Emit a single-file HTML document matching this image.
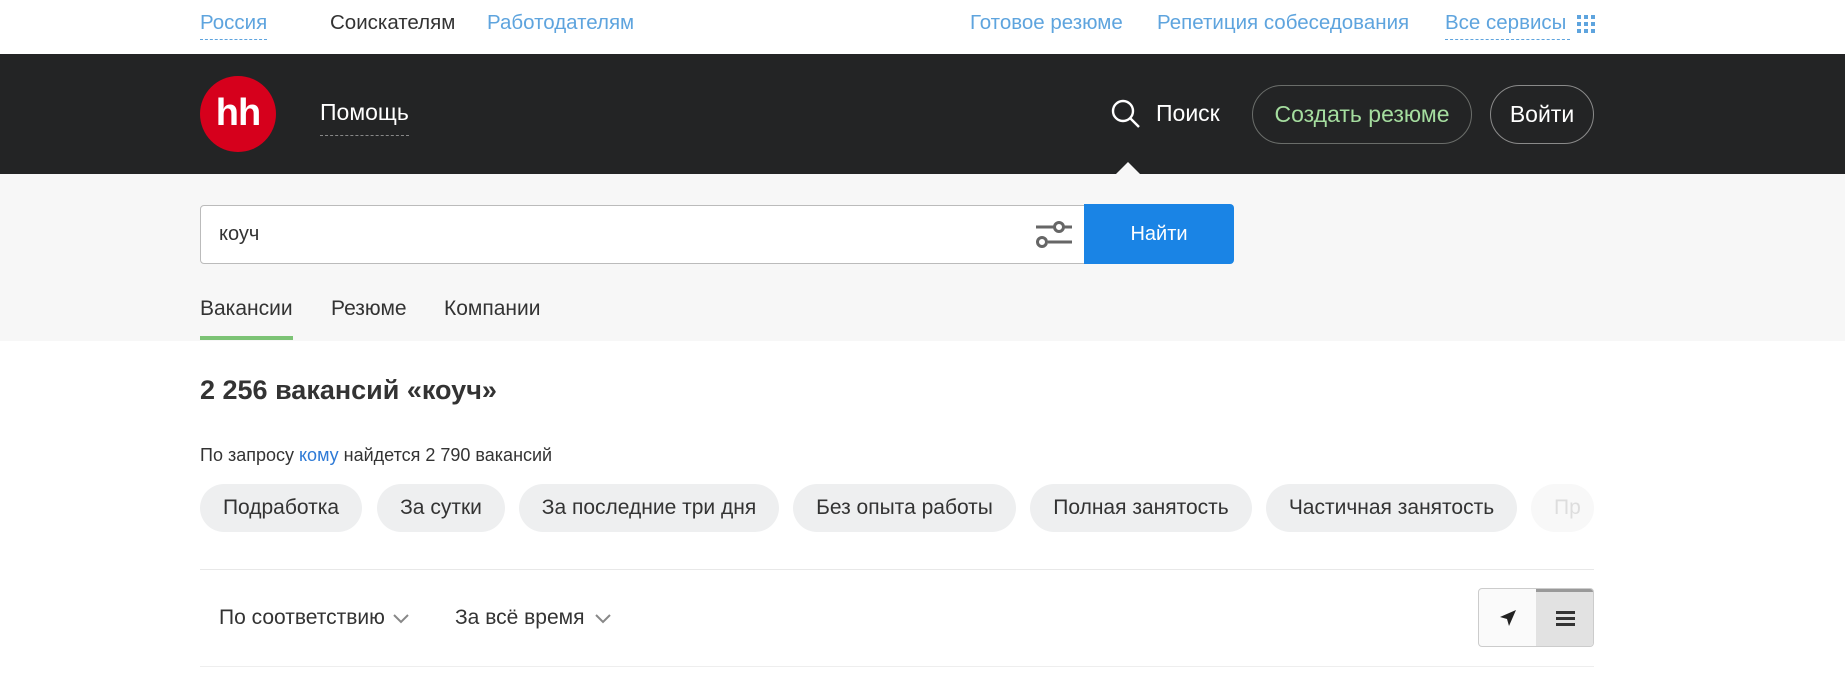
<!DOCTYPE html>
<html><head><meta charset="utf-8"><style>
*{box-sizing:border-box;margin:0;padding:0}
body{width:1845px;height:677px;overflow:hidden;background:#fff;font-family:"Liberation Sans",Arial,sans-serif;color:#333;position:relative}
.a{position:absolute;white-space:nowrap}
.top{position:absolute;left:0;top:0;width:1845px;height:54px;background:#fff;font-size:20.5px}
.blue{color:#5ea4de}
.dash{border-bottom:1px dashed #5ea4de;padding-bottom:4px}
.hdr{position:absolute;left:0;top:54px;width:1845px;height:120px;background:#232425}
.srch{position:absolute;left:0;top:174px;width:1845px;height:167px;background:#f7f7f7}
.chip{position:absolute;top:484px;height:48px;border-radius:24px;background:#eeeff0;font-size:21px;line-height:48px;text-align:center;color:#333}
</style></head><body>
<div class="top">
<span class="a blue dash" style="left:200px;top:11px">Россия</span>
<span class="a" style="left:330px;top:11px;color:#333">Соискателям</span>
<span class="a blue" style="left:487px;top:11px">Работодателям</span>
<span class="a blue" style="left:970px;top:11px">Готовое резюме</span>
<span class="a blue" style="left:1157px;top:11px">Репетиция собеседования</span>
<span class="a blue dash" style="left:1445px;top:11px;width:125px">Все сервисы</span>
<svg class="a" style="left:1577px;top:15px" width="18" height="18" viewBox="0 0 18 18" fill="#5ea4de"><rect x="0" y="0" width="4" height="4"/><rect x="7" y="0" width="4" height="4"/><rect x="14" y="0" width="4" height="4"/><rect x="0" y="7" width="4" height="4"/><rect x="7" y="7" width="4" height="4"/><rect x="14" y="7" width="4" height="4"/><rect x="0" y="14" width="4" height="4"/><rect x="7" y="14" width="4" height="4"/><rect x="14" y="14" width="4" height="4"/></svg>
</div>
<div class="hdr">
<div class="a" style="left:200px;top:22px;width:76px;height:76px;border-radius:50%;background:#d6001c;color:#fff;font-weight:bold;font-size:38px;line-height:74px;text-align:center;letter-spacing:-1px">hh</div>
<span class="a" style="left:320px;top:45px;font-size:23px;color:#fff;border-bottom:1px dashed #888;padding-bottom:9px">Помощь</span>
<svg class="a" style="left:1110px;top:44px" width="32" height="32" viewBox="0 0 32 32" fill="none" stroke="#fff" stroke-width="2.4"><circle cx="13" cy="13" r="10"/><path d="M20.5 20.5 L29 29"/></svg>
<span class="a" style="left:1156px;top:46px;font-size:23px;color:#fff">Поиск</span>
<div class="a" style="left:1252px;top:31px;width:220px;height:59px;border:1px solid #6a6d6a;border-radius:30px;color:#a5dd9f;font-size:23px;line-height:57px;text-align:center">Создать резюме</div>
<div class="a" style="left:1490px;top:31px;width:104px;height:59px;border:1px solid #8a8a8a;border-radius:30px;color:#fff;font-size:23px;line-height:57px;text-align:center">Войти</div>
<div class="a" style="left:1116px;top:108px;width:0;height:0;border-left:12px solid transparent;border-right:12px solid transparent;border-bottom:12px solid #f7f7f7"></div>
</div>
<div class="srch">
<div class="a" style="left:200px;top:31px;width:890px;height:59px;background:#fff;border:1px solid #bbb;border-radius:4px 0 0 4px"></div>
<span class="a" style="left:219px;top:49px;font-size:20px;color:#333">коуч</span>
<svg class="a" style="left:1034px;top:44px" width="40" height="32" viewBox="0 0 40 32" fill="none" stroke="#666" stroke-width="3"><path d="M2 9 H20 M30 9 H38"/><circle cx="25" cy="9" r="4.5"/><path d="M14 24 H38"/><circle cx="8" cy="24" r="4.5"/></svg>
<div class="a" style="left:1084px;top:30px;width:150px;height:60px;background:#1a84e5;border-radius:0 4px 4px 0;color:#fff;font-size:20px;line-height:60px;text-align:center">Найти</div>
<span class="a" style="left:200px;top:123px;font-size:21px;color:#333">Вакансии</span>
<span class="a" style="left:331px;top:123px;font-size:21px;color:#333">Резюме</span>
<span class="a" style="left:444px;top:123px;font-size:21px;color:#333">Компании</span>
<div class="a" style="left:200px;top:162px;width:93px;height:4px;background:#7cc375"></div>
</div>
<span class="a" style="left:200px;top:375px;font-size:27px;font-weight:bold;color:#333">2 256 вакансий «коуч»</span>
<span class="a" style="left:200px;top:445px;font-size:18px;color:#333">По запросу <span style="color:#2e7ad6">кому</span> найдется 2 790 вакансий</span>
<div class="chip" style="left:200px;width:162px">Подработка</div>
<div class="chip" style="left:377px;width:128px">За сутки</div>
<div class="chip" style="left:519px;width:260px">За последние три дня</div>
<div class="chip" style="left:793px;width:223px">Без опыта работы</div>
<div class="chip" style="left:1030px;width:222px">Полная занятость</div>
<div class="chip" style="left:1266px;width:251px">Частичная занятость</div>
<div class="chip" style="left:1531px;width:63px;background:#f8f8f8;color:#ddd;text-align:left;padding-left:23px;overflow:hidden">Пр</div>
<div class="a" style="left:200px;top:569px;width:1394px;height:1px;background:#e8e8e8"></div>
<span class="a" style="left:219px;top:606px;font-size:21px;color:#333">По соответствию</span>
<svg class="a" style="left:392px;top:612px" width="18" height="12" viewBox="0 0 18 12" fill="none" stroke="#888" stroke-width="2"><path d="M2 3 L9 10 L16 3"/></svg>
<span class="a" style="left:455px;top:606px;font-size:21px;color:#333">За всё время</span>
<svg class="a" style="left:594px;top:612px" width="18" height="12" viewBox="0 0 18 12" fill="none" stroke="#888" stroke-width="2"><path d="M2 3 L9 10 L16 3"/></svg>
<div class="a" style="left:1478px;top:588px;width:116px;height:59px;border:1px solid #ccc;border-radius:4px;overflow:hidden;background:#fafafa">
<div style="position:absolute;left:57px;top:0;width:59px;height:59px;background:#e2e2e2;border-top:3px solid #999"></div>
<svg style="position:absolute;left:20px;top:20px" width="18" height="18" viewBox="0 0 18 18"><path d="M17 1 L1 8 L8 10 L10 17 Z" fill="#222"/></svg>
<svg style="position:absolute;left:77px;top:21px" width="19" height="16" viewBox="0 0 19 16" fill="#333"><rect y="1" width="19" height="3"/><rect y="7" width="19" height="3"/><rect y="13" width="19" height="3"/></svg>
</div>
<div class="a" style="left:200px;top:666px;width:1394px;height:1px;background:#eee"></div>
</body></html>
